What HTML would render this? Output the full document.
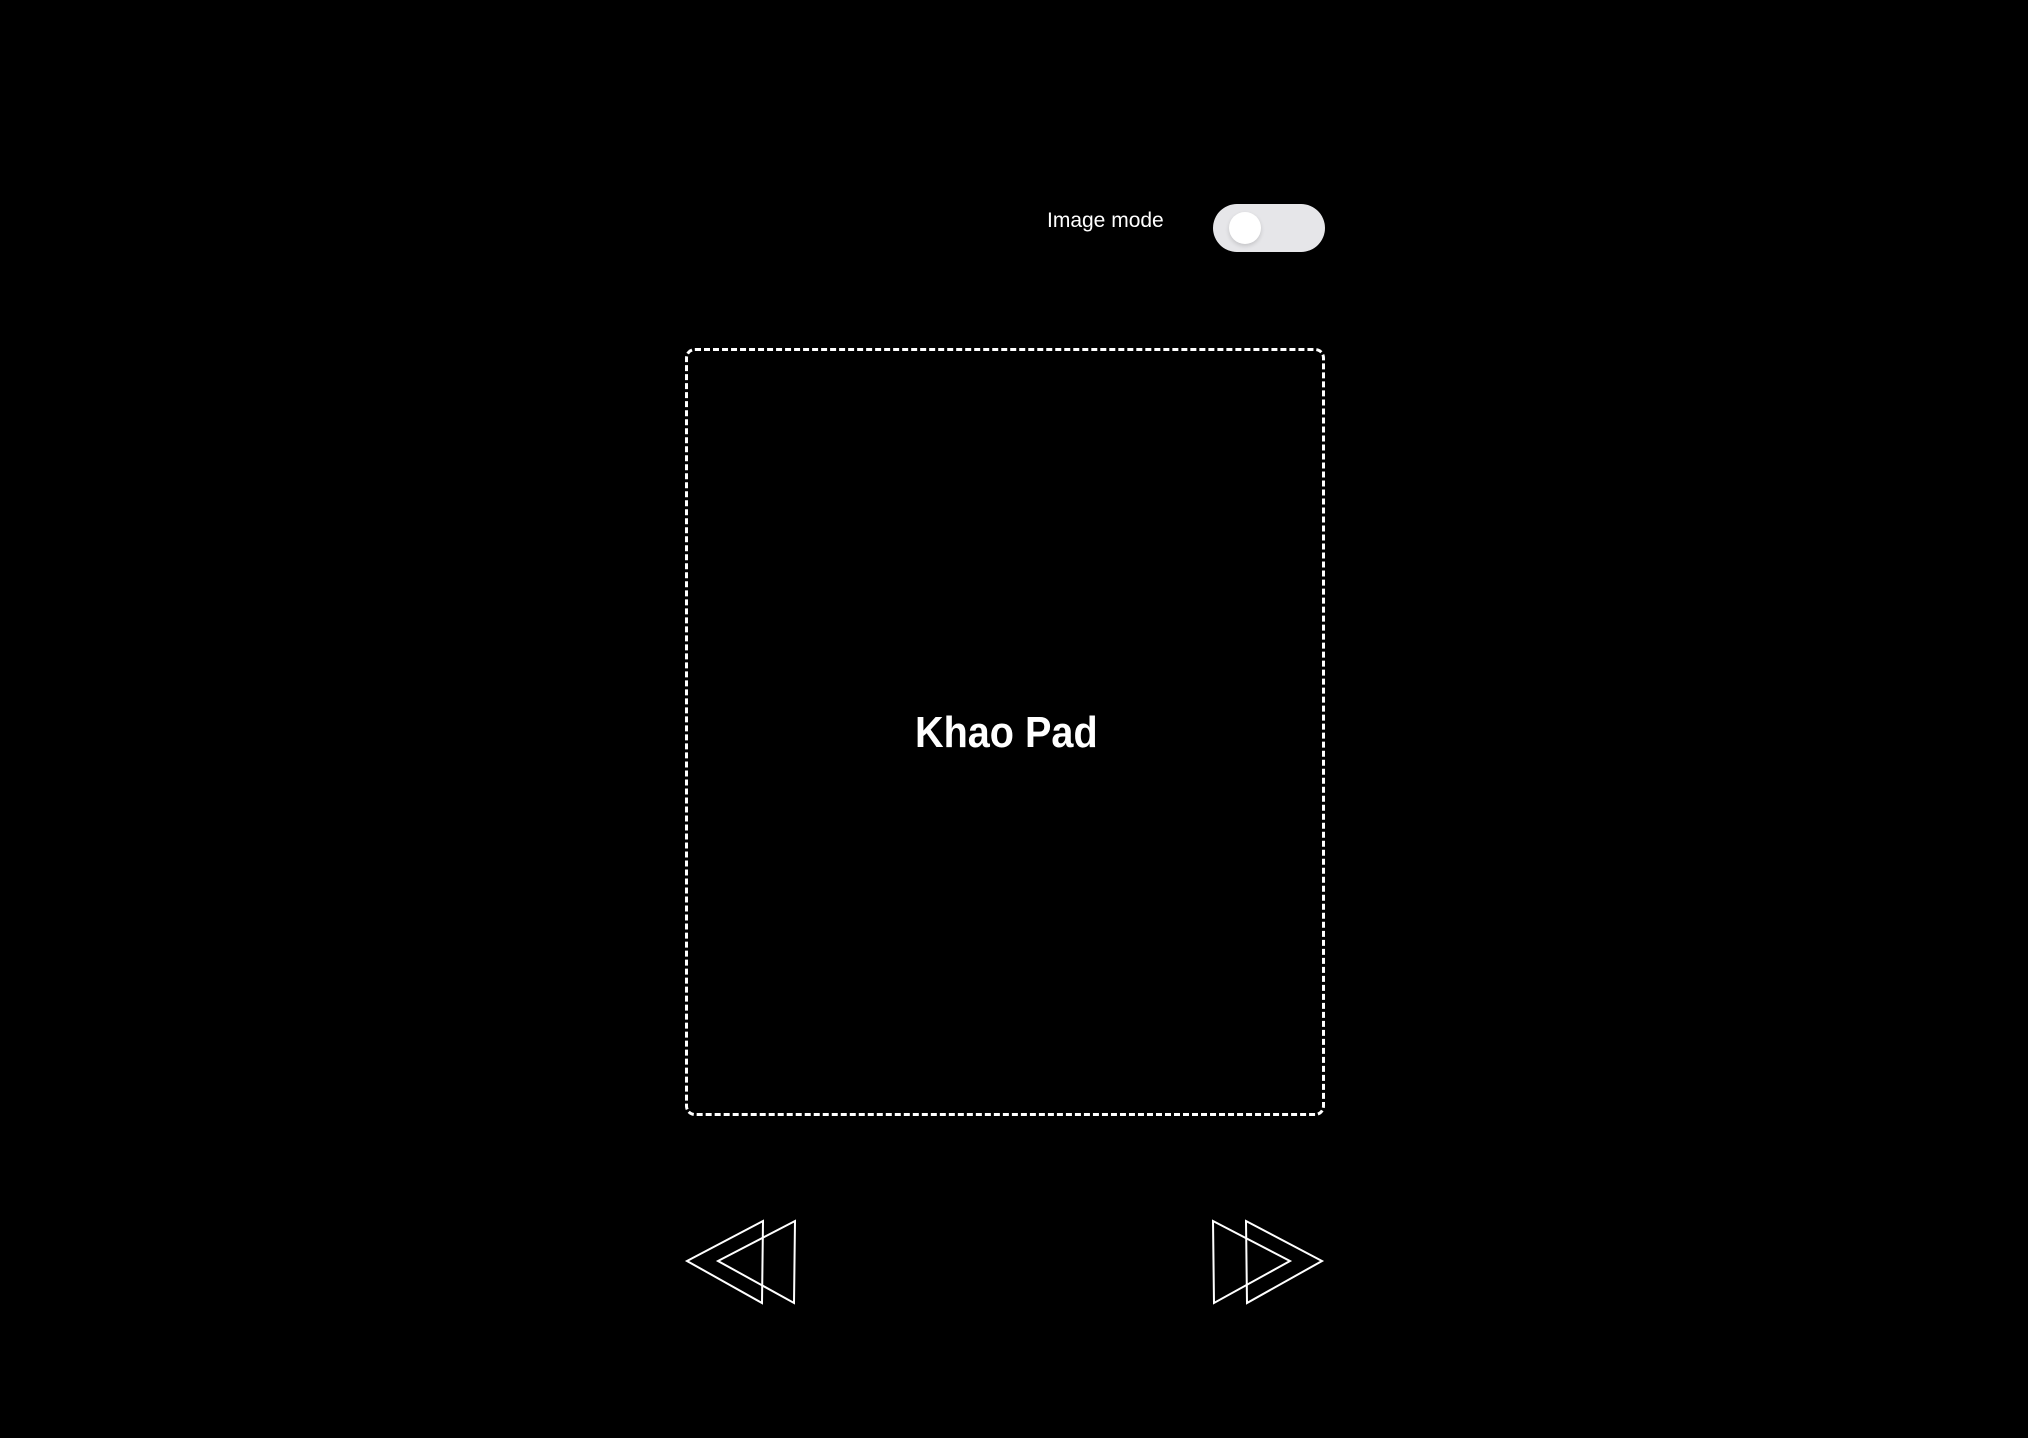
<!DOCTYPE html>
<html><head><style>
html,body{margin:0;padding:0;background:#000;width:2028px;height:1438px;overflow:hidden}
body{position:relative;font-family:"Liberation Sans",sans-serif;color:#fff}
.lbl{position:absolute;left:1047px;top:208px;font-size:21px;line-height:26px;white-space:nowrap}
.tog{position:absolute;left:1213px;top:204px;width:112px;height:48px;border-radius:24px;background:#e6e6e9}
.knob{position:absolute;left:16px;top:8px;width:32px;height:32px;border-radius:50%;background:#fff;box-shadow:0 2px 4px rgba(0,0,0,.15)}
.box{position:absolute;left:685px;top:348px;width:634px;height:762px;border:3px dashed #fff;border-radius:10px}
.title{position:absolute;left:905px;top:706px;width:200px;text-align:center;font-size:44px;font-weight:bold;line-height:54px;transform:scaleX(0.9);white-space:nowrap}
svg{position:absolute;left:0;top:0}
</style></head><body>
<div class="lbl">Image mode</div>
<div class="tog"><div class="knob"></div></div>
<div class="box"></div>
<div class="title">Khao Pad</div>
<svg width="2028" height="1438" fill="none" stroke="#fff" stroke-width="2">
<polygon points="687,1261 763,1221 762,1303"/>
<polygon points="718,1261 795,1221 794,1303"/>
<polygon points="1213,1221 1290,1261 1214,1303"/>
<polygon points="1246,1221 1322,1261 1247,1303"/>
</svg>
</body></html>
